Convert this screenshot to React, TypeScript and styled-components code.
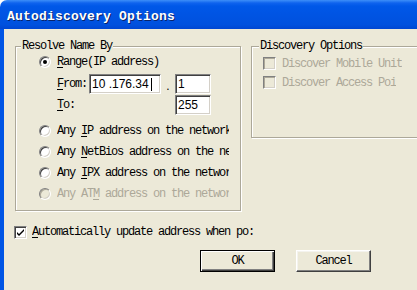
import React from 'react'
import styled, { createGlobalStyle, css } from 'styled-components'

const Global = createGlobalStyle`
  html, body {
    margin: 0;
    padding: 0;
    background: #ffffff;
    overflow: hidden;
  }
`

const uiFont = css`
  font-family: 'Liberation Mono', 'DejaVu Sans Mono', monospace;
  font-size: 12px;
  letter-spacing: -1.2px;
  line-height: 12px;
`

const Window = styled.div`
  width: 100%;
  height: 290px;
  display: flex;
  flex-direction: column;
  overflow: hidden;
`

const TitleBar = styled.div`
  height: 29px;
  flex: none;
  display: flex;
  align-items: center;
  padding-left: 7px;
  border-top-left-radius: 7px;
  background: linear-gradient(
    #3d8ff8 0,
    #0f63ee 3px,
    #0058e8 6px,
    #0054e3 50%,
    #0051de 85%,
    #0046d2 100%
  );
`

const Title = styled.span`
  font-family: 'Liberation Mono', 'DejaVu Sans Mono', monospace;
  font-weight: bold;
  font-size: 13px;
  letter-spacing: 0.2px;
  color: #ffffff;
  text-shadow: 1px 1px 0 #0a246a;
  margin-top: 3px;
`

const Body = styled.div`
  flex: 1;
  background: #ece9d8;
  border-left: 4px solid #0055e5;
  padding: 11px 0 0 11px;
  display: flex;
  flex-direction: column;
`

const TopRow = styled.div`
  display: flex;
  align-items: flex-start;
  gap: 10px;
`

const Group = styled.fieldset<{ $w: number; $h: number }>`
  margin: 0;
  padding: 0;
  box-sizing: border-box;
  width: ${(p) => p.$w}px;
  min-width: ${(p) => p.$w}px;
  height: ${(p) => p.$h}px;
  border: 1px solid #aca899;
  box-shadow: inset 1px 1px 0 #ffffff, 1px 1px 0 #ffffff;
`

const Legend = styled.legend<{ $offset: number }>`
  ${uiFont};
  color: #000000;
  padding: 0 1px;
  margin-left: ${(p) => p.$offset}px;
  background: #ece9d8;
`

const GroupInner = styled.div<{ $left: number; $top: number }>`
  display: flex;
  flex-direction: column;
  padding-left: ${(p) => p.$left}px;
  padding-top: ${(p) => p.$top}px;
`

const OptionRow = styled.div<{ $h: number }>`
  height: ${(p) => p.$h}px;
  display: flex;
  align-items: center;
  gap: 6px;
`

const Label = styled.span<{ $disabled?: boolean; $clip?: number }>`
  ${uiFont};
  white-space: nowrap;
  overflow: hidden;
  color: ${(p) => (p.$disabled ? '#aca899' : '#000000')};
  ${(p) => p.$clip && `max-width: ${p.$clip}px;`}
  u {
    text-decoration: underline;
    text-underline-offset: 2px;
  }
`

const Radio = styled.span<{ $checked?: boolean; $disabled?: boolean }>`
  flex: none;
  position: relative;
  box-sizing: border-box;
  width: 12px;
  height: 12px;
  border-radius: 50%;
  border: 1px solid;
  border-color: #808080 #ffffff #ffffff #808080;
  background: ${(p) => (p.$disabled ? '#ece9d8' : '#ffffff')};
  box-shadow: inset 1px 1px 0 ${(p) => (p.$disabled ? '#aca899' : '#404040')},
    inset -1px -1px 0 #d4d0c8;
  ${(p) =>
    p.$checked &&
    css`
      &::after {
        content: '';
        position: absolute;
        left: 3px;
        top: 3px;
        width: 4px;
        height: 4px;
        border-radius: 50%;
        background: #000000;
      }
    `}
`

const Check = styled.span<{ $disabled?: boolean }>`
  flex: none;
  box-sizing: border-box;
  width: 13px;
  height: 13px;
  display: flex;
  align-items: center;
  justify-content: center;
  border: 1px solid;
  border-color: #808080 #ffffff #ffffff #808080;
  background: ${(p) => (p.$disabled ? '#ece9d8' : '#ffffff')};
  box-shadow: inset 1px 1px 0 ${(p) => (p.$disabled ? '#aca899' : '#404040')},
    inset -1px -1px 0 #d4d0c8;
`

const RangeGrid = styled.div`
  display: grid;
  grid-template-columns: 32px 72px 14px 36px;
  grid-template-rows: 20px 20px;
  row-gap: 1px;
  margin: 2px 0 5px 18px;
  align-items: center;
`

const Field = styled.div<{ $col: number; $row: number }>`
  grid-column: ${(p) => p.$col};
  grid-row: ${(p) => p.$row};
  box-sizing: border-box;
  height: 20px;
  display: flex;
  align-items: center;
  padding-left: 2px;
  background: #ffffff;
  border: 1px solid;
  border-color: #808080 #ffffff #ffffff #808080;
  box-shadow: inset 1px 1px 0 #404040, inset -1px -1px 0 #d4d0c8;
  font-family: 'Liberation Sans', Arial, sans-serif;
  font-size: 12px;
  color: #000000;
`

const Caret = styled.span`
  width: 1px;
  height: 13px;
  margin-left: 2px;
  background: #000000;
`

const Dot = styled.span`
  grid-column: 3;
  grid-row: 1;
  text-align: center;
  font-family: 'Liberation Sans', Arial, sans-serif;
  font-size: 12px;
  padding-top: 3px;
`

const CheckRow = styled.div`
  height: 20px;
  margin: 11px 0 0 -1px;
  display: flex;
  align-items: center;
  gap: 5px;
`

const ButtonRow = styled.div`
  display: flex;
  gap: 21px;
  margin-top: 8px;
  padding-left: 185px;
`

const Button = styled.button<{ $default?: boolean }>`
  ${uiFont};
  width: 75px;
  height: 22px;
  padding: 0;
  color: #000000;
  background: #ece9d8;
  border: 1px solid;
  border-color: ${(p) => (p.$default ? '#000000' : '#ffffff #404040 #404040 #ffffff')};
  box-shadow: ${(p) =>
    p.$default
      ? 'inset 1px 1px 0 #ffffff, inset -1px -1px 0 #404040, inset -2px -2px 0 #808080'
      : 'inset -1px -1px 0 #808080, inset 1px 1px 0 #f4f3ee'};
`

function CheckMark() {
  return (
    <svg width="9" height="9" viewBox="0 0 9 9">
      <path d="M1 4 L3 6 L8 1 L8 3 L3 8 L1 6 Z" fill="#000000" />
    </svg>
  )
}

const addressOptions = [
  { pre: 'Any ', key: 'I', post: 'P address on the network', disabled: false },
  { pre: 'Any ', key: 'N', post: 'etBios address on the network', disabled: false },
  { pre: 'Any ', key: 'I', post: 'PX address on the network', disabled: false },
  { pre: 'Any AT', key: 'M', post: ' address on the network', disabled: true },
]

export default function App(): React.ReactElement {
  return (
    <>
      <Global />
      <Window>
        <TitleBar>
          <Title>Autodiscovery Options</Title>
        </TitleBar>
        <Body>
          <TopRow>
            <Group $w={226} $h={171}>
              <Legend $offset={5}>Resolve Name By</Legend>
              <GroupInner $left={23} $top={0}>
                <OptionRow $h={20}>
                  <Radio $checked />
                  <Label>
                    <u>R</u>ange(IP address)
                  </Label>
                </OptionRow>
                <RangeGrid>
                  <Label>
                    <u>F</u>rom:
                  </Label>
                  <Field $col={2} $row={1}>
                    10 .176.34
                    <Caret />
                  </Field>
                  <Dot>.</Dot>
                  <Field $col={4} $row={1}>1</Field>
                  <Label style={{ gridRow: 2 }}>
                    <u>T</u>o:
                  </Label>
                  <Field $col={4} $row={2}>255</Field>
                </RangeGrid>
                {addressOptions.map((o, i) => (
                  <OptionRow key={i} $h={21}>
                    <Radio $disabled={o.disabled} />
                    <Label $disabled={o.disabled} $clip={172}>
                      {o.pre}
                      <u>{o.key}</u>
                      {o.post}
                    </Label>
                  </OptionRow>
                ))}
              </GroupInner>
            </Group>
            <Group $w={180} $h={98}>
              <Legend $offset={7}>Discovery Options</Legend>
              <GroupInner $left={11} $top={2}>
                <OptionRow $h={19}>
                  <Check $disabled />
                  <Label $disabled>Discover Mobile Unit</Label>
                </OptionRow>
                <OptionRow $h={19}>
                  <Check $disabled />
                  <Label $disabled>Discover Access Poi</Label>
                </OptionRow>
              </GroupInner>
            </Group>
          </TopRow>
          <CheckRow>
            <Check>
              <CheckMark />
            </Check>
            <Label>
              <u>A</u>utomatically update address when po:
            </Label>
          </CheckRow>
          <ButtonRow>
            <Button $default>OK</Button>
            <Button>Cancel</Button>
          </ButtonRow>
        </Body>
      </Window>
    </>
  )
}
